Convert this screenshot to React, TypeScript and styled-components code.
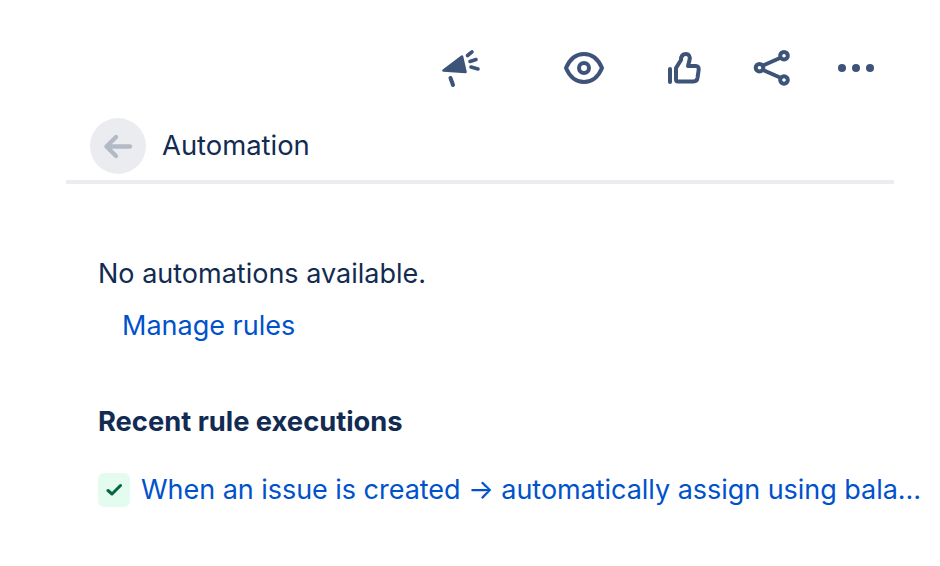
import * as React from "react";
import styled, { createGlobalStyle } from "styled-components";

const GlobalStyle = createGlobalStyle`
  html, body {
    margin: 0;
    background: #fff;
  }
  body {
    font-family: Inter, "Liberation Sans", sans-serif;
    color: #122b52;
    overflow: hidden;
  }
`;

const Page = styled.div`
  width: 940px;
  height: 566px;
  box-sizing: border-box;
  padding: 46px 46px 0 66px;
`;

const Toolbar = styled.div`
  display: flex;
  justify-content: flex-end;
  height: 44px;
  padding-right: 16px;
`;

const IconButton = styled.div<{ $left?: number }>`
  width: 44px;
  height: 44px;
  margin-left: ${p => p.$left || 0}px;
  display: flex;
  align-items: center;
  justify-content: center;
  color: #3d5478;
`;

const Header = styled.div`
  display: flex;
  align-items: center;
  gap: 16px;
  height: 56px;
  margin-top: 28px;
  padding-left: 24px;
`;

const BackButton = styled.div`
  width: 56px;
  height: 56px;
  border-radius: 50%;
  background: #ebecf0;
  display: flex;
  align-items: center;
  justify-content: center;
`;

const Title = styled.div`
  font-size: 27.4px;
  line-height: 32px;
  padding-bottom: 2px;
`;

const Divider = styled.div`
  height: 4px;
  margin-top: 6px;
  background: #ebecf0;
`;

const Content = styled.div`
  padding: 72px 0 0 32px;
`;

const Message = styled.div`
  font-size: 27px;
  line-height: 36px;
`;

const ManageLink = styled.a`
  display: block;
  margin: 16px 0 0 24px;
  font-size: 27px;
  line-height: 36px;
  color: #0052cc;
`;

const SectionTitle = styled.div`
  margin-top: 60px;
  font-size: 27.3px;
  line-height: 36px;
  font-weight: 700;
`;

const Execution = styled.div`
  display: flex;
  align-items: center;
  gap: 11px;
  margin-top: 32px;
  width: 825px;
`;

const StatusBadge = styled.div`
  flex: none;
  width: 32px;
  height: 34px;
  border-radius: 6px;
  background: #e3fcef;
  display: flex;
  align-items: center;
  justify-content: center;
`;

const ExecutionLink = styled.a`
  flex: 1;
  min-width: 0;
  font-size: 27px;
  line-height: 36px;
  letter-spacing: -0.04px;
  color: #0052cc;
  white-space: nowrap;
  overflow: hidden;
  text-overflow: ellipsis;
`;

const MegaphoneIcon = () => (
  <svg width="44" height="44" viewBox="0 0 44 44" fill="none" stroke="currentColor" strokeLinecap="round" strokeLinejoin="round">
    <path d="M4.5 24.5 L23 10.5 L26.5 26 Z" fill="currentColor" strokeWidth="2.6" />
    <path d="M11.5 32 L14 39" strokeWidth="4" />
    <path d="M28.5 9.5 L33 5.8 M31 15.5 L37 13.5 M32 21 L39 23" strokeWidth="3.6" />
  </svg>
);

const EyeIcon = () => (
  <svg width="44" height="44" viewBox="0 0 44 44" fill="none" stroke="currentColor" strokeWidth="4">
    <path d="M4 22 C8 12.5 15 8 22 8 C29 8 36 12.5 40 22 C36 31.5 29 36 22 36 C15 36 8 31.5 4 22 Z" strokeLinejoin="round" />
    <circle cx="22" cy="22" r="5" />
  </svg>
);

const ThumbIcon = () => (
  <svg width="44" height="44" viewBox="0 0 44 44" fill="none" stroke="currentColor" strokeWidth="4" strokeLinecap="round" strokeLinejoin="round">
    <path d="M8 23 V36" />
    <path d="M14 22 L19 14 C19 9 22 8 24 8 C27 8 28.5 11 27.5 14 L26 20 H34 C36.5 20 37 22 36.5 25 L35.5 32 C35 35 33.5 35.5 31.5 35.5 H16 C14.5 35.5 14 35 14 33.5 Z" />
  </svg>
);

const ShareIcon = () => (
  <svg width="44" height="44" viewBox="0 0 44 44" fill="none" stroke="currentColor" strokeWidth="4">
    <path d="M13 19.5 L30 12 M13 24 L30 31.5" />
    <circle cx="9.5" cy="21.7" r="3.8" />
    <circle cx="34" cy="9.7" r="3.8" />
    <circle cx="34" cy="34" r="3.8" />
  </svg>
);

const MoreIcon = () => (
  <svg width="44" height="44" viewBox="0 0 44 44" fill="currentColor">
    <circle cx="8" cy="22" r="4" />
    <circle cx="22" cy="22" r="4" />
    <circle cx="36" cy="22" r="4" />
  </svg>
);

const BackIcon = () => (
  <svg width="32" height="32" viewBox="0 0 32 32" fill="none" stroke="#b3bac5" strokeWidth="4.4" strokeLinecap="round" strokeLinejoin="round">
    <path d="M4.5 16.5 H28 M14 7 L4.5 16.5 L14 26" />
  </svg>
);

const CheckIcon = () => (
  <svg width="16" height="14" viewBox="0 0 16 14" fill="none" stroke="#006644" strokeWidth="3" strokeLinecap="round" strokeLinejoin="round">
    <path d="M2 7.5 L6 11 L14.5 2.5" />
  </svg>
);

const App: React.FC = () => (
  <Page>
    <GlobalStyle />
    <Toolbar>
      <IconButton>
        <MegaphoneIcon />
      </IconButton>
      <IconButton $left={79}>
        <EyeIcon />
      </IconButton>
      <IconButton $left={56}>
        <ThumbIcon />
      </IconButton>
      <IconButton $left={44}>
        <ShareIcon />
      </IconButton>
      <IconButton $left={40}>
        <MoreIcon />
      </IconButton>
    </Toolbar>
    <Header>
      <BackButton>
        <BackIcon />
      </BackButton>
      <Title>Automation</Title>
    </Header>
    <Divider />
    <Content>
      <Message>No automations available.</Message>
      <ManageLink>Manage rules</ManageLink>
      <SectionTitle>Recent rule executions</SectionTitle>
      <Execution>
        <StatusBadge>
          <CheckIcon />
        </StatusBadge>
        <ExecutionLink>When an issue is created → automatically assign using balanced workload</ExecutionLink>
      </Execution>
    </Content>
  </Page>
);

export default App;
